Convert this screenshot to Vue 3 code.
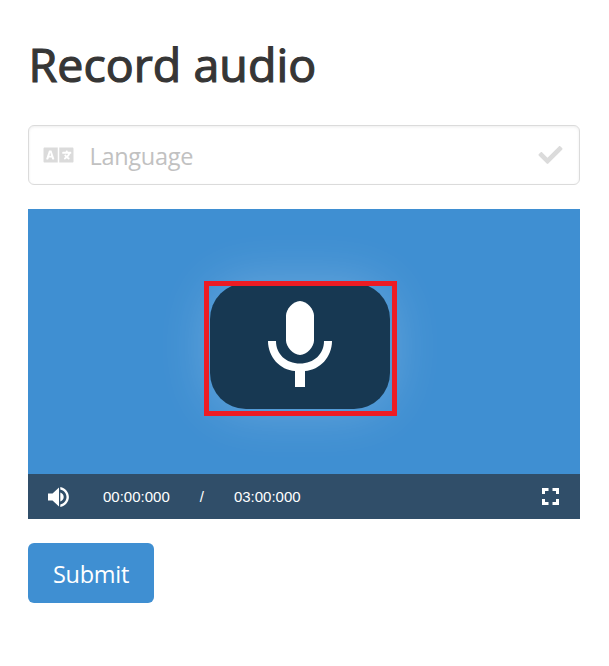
<script setup>
import { ref } from 'vue'

const language = ref('')
const elapsed = ref('00:00:000')
const duration = ref('03:00:000')
</script>

<template>
  <main class="page">
    <h1 class="title">Record audio</h1>

    <label class="field">
      <svg class="language-icon" viewBox="0 0 640 512" aria-hidden="true">
        <path d="M152.1 236.2c-3.5-12.1-7.8-33.2-7.8-33.2h-.5s-4.3 21.1-7.8 33.2l-11.1 37.5H163zM616 96H336v320h280c13.3 0 24-10.7 24-24V120c0-13.3-10.7-24-24-24zm-24 120c0 6.6-5.4 12-12 12h-11.4c-6.9 23.6-21.7 47.4-42.7 69.9 8.4 6.4 17.1 12.5 26.1 18 5.5 3.4 7.3 10.5 4.1 16.2l-7.9 13.9c-3.4 5.9-10.9 7.8-16.7 4.3-12.6-7.8-24.5-16.1-35.4-24.9-10.9 8.7-22.7 17.1-35.4 24.9-5.8 3.5-13.3 1.6-16.7-4.3l-7.9-13.9c-3.2-5.6-1.4-12.8 4.2-16.2 9.3-5.7 18-11.7 26.1-18-7.9-8.4-14.9-17-21-25.7-4-5.7-2.2-13.6 3.7-17.1l6.5-3.9 7.3-4.3c5.4-3.2 12.4-1.7 16 3.4 5 7 10.8 14 17.4 20.9 13.5-14.2 23.8-28.9 30-43.2H412c-6.6 0-12-5.4-12-12v-16c0-6.6 5.4-12 12-12h64v-16c0-6.6 5.4-12 12-12h16c6.6 0 12 5.4 12 12v16h64c6.6 0 12 5.4 12 12zM0 120v272c0 13.3 10.7 24 24 24h280V96H24c-13.3 0-24 10.7-24 24zm58.9 216.1L116.4 167c1.7-4.9 6.2-8.1 11.4-8.1h32.5c5.1 0 9.7 3.3 11.4 8.1l57.5 169.1c2.6 7.8-3.1 15.9-11.4 15.9h-22.9a12 12 0 0 1-11.5-8.6l-9.4-31.9h-60.2l-9.1 31.8c-1.5 5.1-6.2 8.7-11.5 8.7H70.3c-8.2 0-14-8.1-11.4-15.9z" />
      </svg>
      <input v-model="language" class="input" type="text" placeholder="Language" />
      <svg class="check-icon" viewBox="0 0 512 512" aria-hidden="true">
        <path d="M173.898 439.404l-166.4-166.4c-9.997-9.997-9.997-26.206 0-36.204l36.203-36.204c9.997-9.998 26.207-9.998 36.204 0L192 312.69 432.095 72.596c9.997-9.997 26.207-9.997 36.204 0l36.203 36.204c9.997 9.997 9.997 26.206 0 36.204l-294.4 294.401c-9.998 9.997-26.207 9.997-36.204-.001z" />
      </svg>
    </label>

    <section class="player">
      <div class="stage">
        <div class="highlight">
          <button class="record" type="button" aria-label="Record">
            <svg class="mic" viewBox="0 0 64 86" aria-hidden="true">
              <path d="M32 0C39 0 46 8.500 46 14.500V39.500C46 45.500 39 54 32 54S18 45.500 18 39.500V14.500C18 8.500 25 0 32 0Z" />
              <path d="M0 40H8C8 53 18 62.500 32 62.500S56 53 56 40H64C64 56 52 69 37 70V86H27V70C12 69 0 56 0 40Z" />
            </svg>
          </button>
        </div>
      </div>
      <div class="controls">
        <svg class="volume" viewBox="0 0 22 22" aria-hidden="true">
          <path d="M1 7.500H5.500L12 1.500V20.500L5.500 14.500H1Z" />
          <path d="M13.300 6.400C15.400 7.200 16.700 8.900 16.700 11S15.400 14.800 13.300 15.600Z" />
          <path d="M13.300 1C18.200 2 21.900 6 21.900 11S18.200 20 13.300 21V18.500C17 17.500 19.500 14.600 19.500 11S17 4.500 13.300 3.500Z" />
        </svg>
        <span class="elapsed">{{ elapsed }}</span>
        <span class="divider">/</span>
        <span class="duration">{{ duration }}</span>
        <svg class="fullscreen" viewBox="0 0 17 17" aria-hidden="true">
          <path d="M0 0H6.500V3H3V6H0ZM10.500 0H17V6H14V3H10.500ZM0 11H3V14H6.500V17H0ZM14 11H17V17H10.500V14H14Z" />
        </svg>
      </div>
    </section>

    <button class="submit" type="button">Submit</button>
  </main>
</template>

<style>
body {
  margin: 0;
  background: #fff;
}
</style>

<style scoped>
.page {
  box-sizing: border-box;
  width: 609px;
  height: 666px;
  padding: 37px 29px 0 28px;
  font-family: "Open Sans", "Noto Sans", sans-serif;
}
.title {
  margin: 0 0 34px;
  height: 54px;
  line-height: 54px;
  font-size: 46.500px;
  font-weight: 400;
  -webkit-text-stroke: 1.2px #363636;
  letter-spacing: 0.05px;
  text-indent: 0.5px;
  color: #363636;
  white-space: nowrap;
}
.field {
  box-sizing: border-box;
  display: flex;
  align-items: center;
  height: 60px;
  margin-bottom: 24px;
  padding: 0 16px 0 14px;
  border: 1.5px solid #dbdbdb;
  border-radius: 6px;
  box-shadow: inset 0 1px 3px rgba(10, 10, 10, 0.07);
}
.language-icon {
  width: 31px;
  height: 24px;
  margin-right: 16px;
  fill: #dbdbdb;
}
.input {
  flex: 1;
  min-width: 0;
  padding: 2px 0 0;
  border: 0;
  outline: 0;
  background: transparent;
  font: 400 23.500px "Open Sans", "Noto Sans", sans-serif;
  letter-spacing: -0.3px;
  text-indent: -0.5px;
  color: #363636;
}
.input::placeholder {
  color: #c1c1c1;
  opacity: 1;
}
.check-icon {
  width: 25px;
  height: 24px;
  fill: #dbdbdb;
}
.player {
  position: relative;
  z-index: 0;
  height: 310px;
  margin-bottom: 24px;
  background: #3f8fd2;
}
.stage {
  box-sizing: border-box;
  height: 265px;
  padding: 72px 0 0 176px;
}
.highlight {
  box-sizing: border-box;
  width: 193px;
  height: 135px;
  padding: 0 1px;
  border: 5px solid #ed1c24;
}
.record {
  position: relative;
  z-index: -1;
  display: flex;
  justify-content: center;
  box-sizing: border-box;
  width: 180px;
  height: 126px;
  margin-top: -3px;
  padding: 18px 0 0;
  border: 0;
  border-radius: 36px;
  background: #173852;
  box-shadow: 0 0 54px rgba(255, 255, 255, 0.24);
}
.mic {
  width: 64px;
  height: 86px;
  fill: #fff;
}
.controls {
  display: flex;
  align-items: center;
  box-sizing: border-box;
  height: 45px;
  padding: 0 21px 0 19px;
  background: #304e69;
  color: #fff;
  font: 15px/45px "Liberation Sans", Arial, sans-serif;
}
.volume {
  width: 22px;
  height: 22px;
  margin-right: 34px;
  fill: #fff;
}
.divider {
  margin: 0 30px;
}
.fullscreen {
  width: 17px;
  height: 17px;
  margin-left: auto;
  fill: #fff;
}
.submit {
  display: block;
  width: 126px;
  height: 60px;
  padding: 1px 0 0;
  border: 0;
  border-radius: 6px;
  background: #3f8fd2;
  color: #fff;
  font: 400 23.500px "Open Sans", "Noto Sans", sans-serif;
  letter-spacing: -0.25px;
}
</style>
